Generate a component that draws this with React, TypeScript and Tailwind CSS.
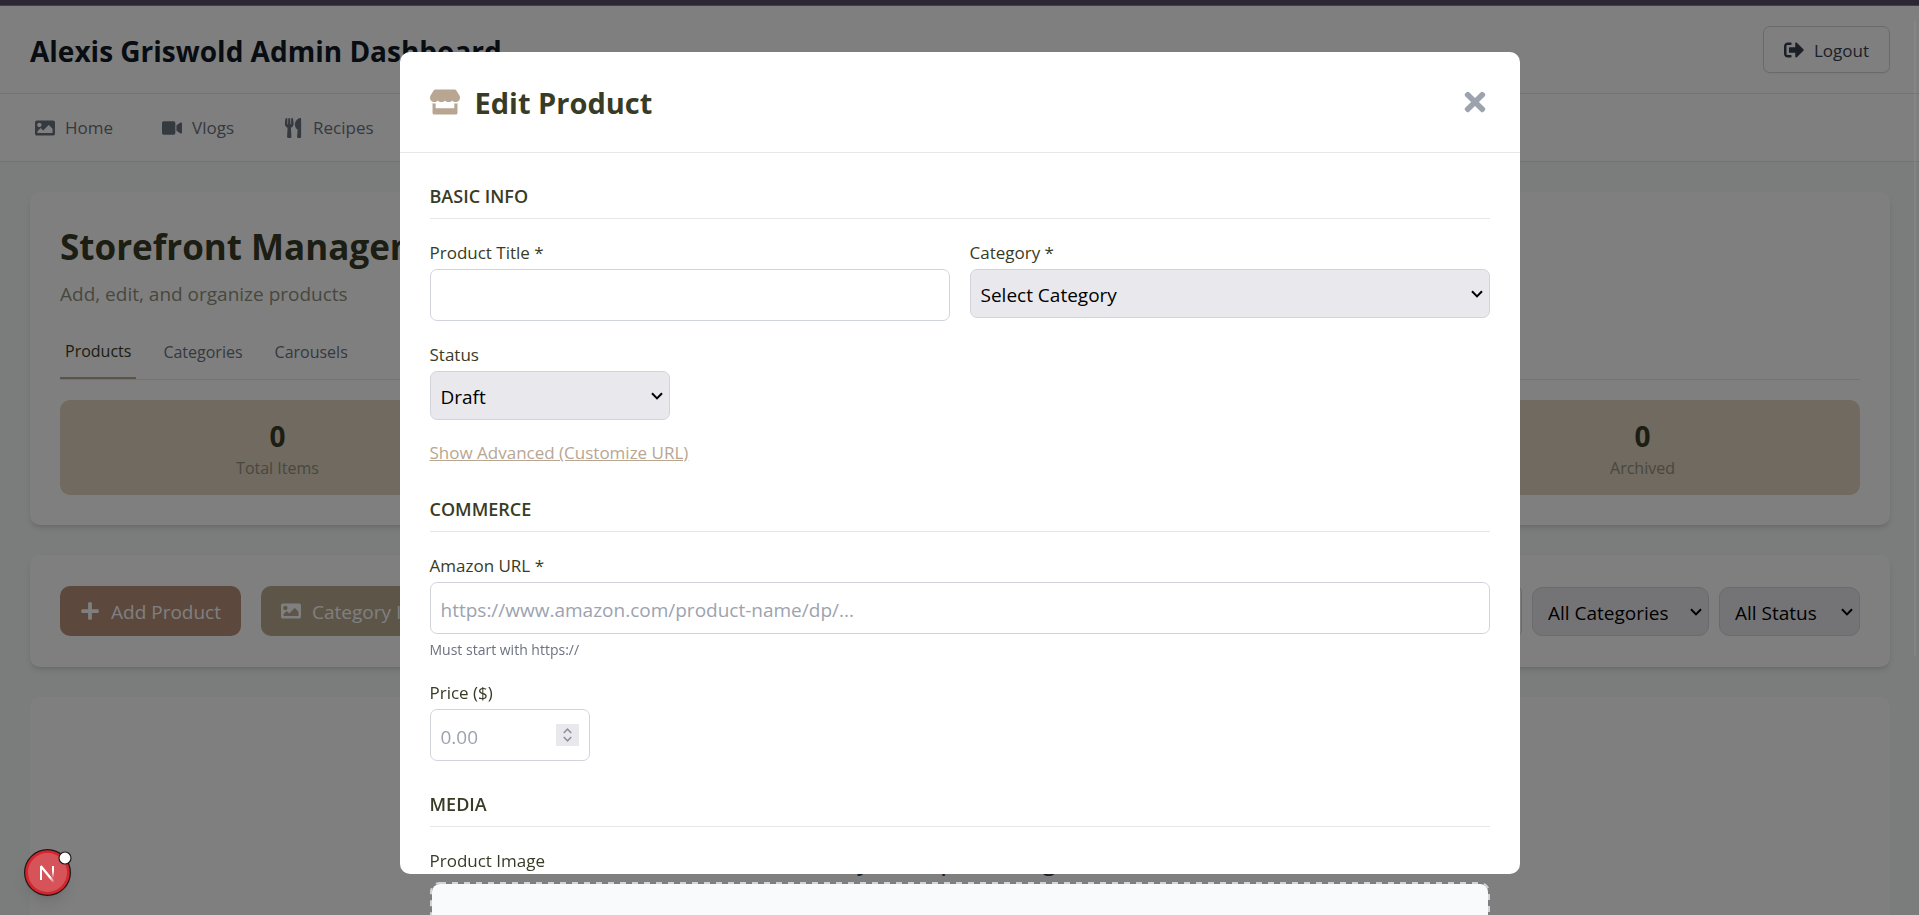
import { useState } from "react";
import type { ReactNode } from "react";
import {
  FaBlog,
  FaImage,
  FaPlus,
  FaSignOutAlt,
  FaStore,
  FaTimes,
  FaUtensils,
  FaVideo,
} from "react-icons/fa";

const SANS = "font-['Open_Sans','Noto_Sans',sans-serif]";

function Chevron({ className }: { className: string }) {
  return (
    <svg viewBox="0 0 12 8" className={className} fill="none" stroke="currentColor" strokeWidth="2" aria-hidden="true">
      <path d="M1 1.2 6 6.4 11 1.2" />
    </svg>
  );
}

function Select({ id, label, options, className }: { id: string; label?: string; options: string[]; className: string }) {
  return (
    <div className="relative">
      <select
        id={id}
        aria-label={label}
        className={`h-[49px] w-full appearance-none border border-[#d1d5db] bg-[#e9e9ed] pt-1 pr-9 text-[19px] text-black ${className}`}
      >
        {options.map((o) => (
          <option key={o}>{o}</option>
        ))}
      </select>
      <Chevron className="pointer-events-none absolute top-[21px] right-[7px] h-2 w-3 text-black" />
    </div>
  );
}

function Section({ title, children }: { title: string; children: ReactNode }) {
  return (
    <section>
      <h3 className="mb-5 border-b border-[#e5e7eb] pb-2 text-[18px] leading-[27px] font-semibold uppercase">{title}</h3>
      <div className="flex flex-col gap-5">{children}</div>
    </section>
  );
}

function Label({ htmlFor, children }: { htmlFor: string; children: ReactNode }) {
  return (
    <label htmlFor={htmlFor} className="mb-[3px] block text-[17px] leading-[27px]">
      {children}
    </label>
  );
}

const INPUT =
  "block h-[52px] rounded-[7px] border border-[#d1d5db] bg-white px-2.5 pt-1 text-[19px] text-black placeholder:text-[#9ca3af] placeholder:opacity-100";

function EditProduct() {
  return (
    <div className="fixed inset-x-0 top-1.5 bottom-0 z-10 flex justify-center bg-black/50 px-5 pt-[46px] pb-[41px]">
      <div role="dialog" aria-labelledby="dialog-title" className="h-full w-full max-w-[1120px] rounded-[10px] bg-white text-[#383b26]">
        <header className="flex h-[101px] items-center justify-between border-b border-[#e5e7eb] px-[30px]">
          <h2 id="dialog-title" className="flex items-center text-[29px] leading-10 font-bold">
            <FaStore className="mr-[15px] size-[30px] text-[#b8a692]" />
            <span className="pt-0.5">Edit Product</span>
          </h2>
          <button type="button" aria-label="Close" className="text-[#9ca3af]">
            <FaTimes className="size-[30px]" />
          </button>
        </header>
        <form className="flex flex-col gap-[30px] p-[30px]">
          <Section title="Basic Info">
            <div className="grid grid-cols-2 gap-5">
              <div>
                <Label htmlFor="title">Product Title *</Label>
                <input id="title" className={`${INPUT} w-full`} />
              </div>
              <div>
                <Label htmlFor="category">Category *</Label>
                <Select id="category" options={["Select Category"]} className="rounded-[7px] pl-2.5" />
              </div>
            </div>
            <div className="w-60">
              <Label htmlFor="status">Status</Label>
              <Select id="status" options={["Draft", "Published", "Archived"]} className="rounded-[7px] pl-2.5" />
            </div>
            <button type="button" className="self-start text-[17px] leading-[26px] text-[#b8a692] underline">
              Show Advanced (Customize URL)
            </button>
          </Section>
          <Section title="Commerce">
            <div>
              <Label htmlFor="url">Amazon URL *</Label>
              <input id="url" type="url" placeholder="https://www.amazon.com/product-name/dp/..." className={`${INPUT} w-full`} />
              <p className="mt-1.5 text-[14px] leading-[19px] text-[#6b7280]">Must start with https://</p>
            </div>
            <div>
              <Label htmlFor="price">Price ($)</Label>
              <div className="relative w-40">
                <input id="price" inputMode="decimal" placeholder="0.00" className={`${INPUT} w-full pr-10`} />
                <div className="absolute top-[15px] right-[11px] flex h-[22px] w-[23px] flex-col items-center justify-between bg-[#e9e9ed] py-1 text-[#8f8f9d]">
                  <Chevron className="h-[6px] w-[9px] rotate-180" />
                  <Chevron className="h-[6px] w-[9px]" />
                </div>
              </div>
            </div>
          </Section>
          <Section title="Media">
            <div>
              <Label htmlFor="image">Product Image</Label>
              <div className="relative mt-2 h-40 p-0.5">
                <div className="h-full rounded-[8px] bg-[#f9fafb]">
                  <input id="image" type="file" className="sr-only" />
                </div>
                <svg className="pointer-events-none absolute inset-0 size-full" aria-hidden="true">
                  <rect
                    x="1"
                    y="1"
                    rx="9"
                    className="h-[calc(100%-2px)] w-[calc(100%-2px)]"
                    fill="none"
                    stroke="#d1d5db"
                    strokeWidth="2"
                    strokeDasharray="6 6"
                  />
                </svg>
              </div>
            </div>
          </Section>
        </form>
      </div>
    </div>
  );
}

function DevBadge() {
  return (
    <button type="button" aria-label="Open developer tools" className="fixed bottom-[19px] left-6 z-20 size-[47px] rounded-full shadow-lg">
      <svg viewBox="0 0 47 47" className="size-full overflow-visible" aria-hidden="true">
        <defs>
          <linearGradient id="badge-stem" x1="0" y1="0" x2="0" y2="1">
            <stop offset="0.4" stopColor="#fff" />
            <stop offset="1" stopColor="#fff" stopOpacity="0" />
          </linearGradient>
          <linearGradient id="badge-diagonal" x1="0" y1="0" x2="1" y2="1">
            <stop offset="0.7" stopColor="#fff" />
            <stop offset="1" stopColor="#fff" stopOpacity="0.1" />
          </linearGradient>
        </defs>
        <circle cx="23.5" cy="23.5" r="23.5" fill="#1f1416" />
        <circle cx="23.5" cy="23.5" r="22.3" fill="#d3262e" />
        <circle cx="23.5" cy="23.5" r="19.5" fill="#d65459" />
        <path d="M17 31V17" stroke="#fff" strokeWidth="2" />
        <path d="M16.8 17 29.8 33" stroke="url(#badge-diagonal)" strokeWidth="2.2" />
        <rect x="28" y="17" width="2" height="12" fill="url(#badge-stem)" />
        <circle cx="41" cy="9" r="6" fill="#fff" stroke="#1f1f1f" strokeWidth="1.2" />
      </svg>
    </button>
  );
}

const NAV = [
  { name: "Home", icon: FaImage },
  { name: "Vlogs", icon: FaVideo },
  { name: "Recipes", icon: FaUtensils },
  { name: "Blog", icon: FaBlog },
];

const STATS = ["Total Items", "Published", "Drafts", "Archived"];
const TABS = ["Products", "Categories", "Carousels"];
const CARD = "rounded-[10px] bg-white p-[30px] shadow-md";

export default function App() {
  const [tab, setTab] = useState("Products");
  return (
    <div className={`flex h-screen flex-col overflow-hidden bg-[#f5faf7] ${SANS}`}>
      <div className="h-1.5 shrink-0 border-b border-[#423e4c] bg-[#2b2735]" />
      <header className="flex h-[88px] shrink-0 items-center justify-between border-b border-[#e5e7eb] bg-white pr-[29px] pl-[30px]">
        <h1 className="pt-0.5 text-[28px] leading-10 font-bold text-[#111827]">Alexis Griswold Admin Dashboard</h1>
        <button
          type="button"
          className="flex h-[47px] items-center rounded-[7px] border border-[#d1d5db] bg-white px-5 text-[17px] text-[#374151] shadow-xs"
        >
          <FaSignOutAlt className="mr-2.5 size-5" />
          <span className="pt-0.5">Logout</span>
        </button>
      </header>
      <nav className="flex h-[68px] shrink-0 items-center gap-[49px] border-b border-[#e5e7eb] bg-white px-[35px] text-[17px] text-[#6b7280]">
        {NAV.map(({ name, icon: Icon }) => (
          <a key={name} href={`#${name.toLowerCase()}`} className="flex items-center gap-2.5">
            <Icon className="size-5" />
            {name}
          </a>
        ))}
      </nav>
      <main className="flex grow flex-col gap-[30px] pt-[30px] pr-[29px] pl-[30px]">
        <section className={`${CARD} shrink-0`}>
          <h2 className="text-[35px] leading-[50px] font-bold text-[#383b26]">Storefront Management</h2>
          <p className="mt-[7px] text-[19px] leading-[30px] text-[#8f907c]">Add, edit, and organize products</p>
          <div role="tablist" className="mt-[21px] flex h-[50px] gap-[22px] border-b border-[#e5e7eb]">
            {TABS.map((t) => (
              <button
                key={t}
                type="button"
                role="tab"
                aria-selected={t === tab}
                onClick={() => setTab(t)}
                className={`px-[5px] pb-1.5 text-[16px] ${t === tab ? "border-b-2 border-[#b8a692] text-[#383b26]" : "text-[#6b7280]"}`}
              >
                {t}
              </button>
            ))}
          </div>
          <div className="mt-5 grid grid-cols-4 gap-5">
            {STATS.map((s) => (
              <div key={s} className="rounded-[10px] bg-[#e3d4c0] px-[15px] pt-4 pb-3.5 text-center">
                <div className="text-[28px] leading-10 font-bold text-[#383b26]">0</div>
                <div className="text-[16px] leading-[25px] text-[#8f907c]">{s}</div>
              </div>
            ))}
          </div>
        </section>
        <section className={`${CARD} flex shrink-0 items-center justify-between`}>
          <div className="flex gap-5">
            <button type="button" className="flex h-[50px] items-center gap-[11px] rounded-[10px] bg-[#b8917a] px-5 text-[19px] text-white">
              <FaPlus className="size-5" />
              <span className="pt-[3px]">Add Product</span>
            </button>
            <button type="button" className="flex h-[50px] items-center gap-[11px] rounded-[10px] bg-[#baaa90] px-5 text-[19px] text-white">
              <FaImage className="size-5" />
              <span className="pt-[3px]">Category Images</span>
            </button>
          </div>
          <div className="flex items-center gap-2.5">
            <input aria-label="Search products" placeholder="Search products..." className={`${INPUT} w-80`} />
            <div className="w-[177px]">
              <Select id="filter-category" label="Filter by category" options={["All Categories"]} className="rounded-[10px] pl-[15px]" />
            </div>
            <div className="w-[141px]">
              <Select id="filter-status" label="Filter by status" options={["All Status"]} className="rounded-[10px] pl-[15px]" />
            </div>
          </div>
        </section>
        <section className="grow rounded-t-[10px] bg-white pt-[150px] text-center">
          <h3 className="text-[22px] leading-[30px] font-semibold text-[#374151]">Ready to shop a catalog now?</h3>
        </section>
      </main>
      <div className="fixed top-[21px] right-[3px] z-20 h-[635px] w-0.5 bg-white/5" />
      <EditProduct />
      <DevBadge />
    </div>
  );
}
